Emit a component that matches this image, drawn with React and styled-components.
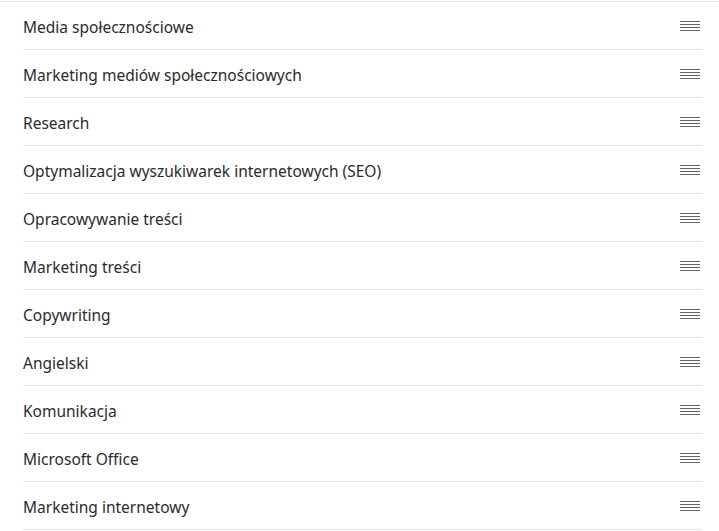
import React from 'react';
import styled, { createGlobalStyle } from 'styled-components';

const GlobalStyle = createGlobalStyle`
  body {
    margin: 0;
    background: #ffffff;
    font-family: "Noto Sans", "Open Sans", sans-serif;
  }
`

const Page = styled.div`
  padding-top: 1px;
`

const List = styled.ul`
  list-style: none;
  margin: 0;
  padding: 0 17px 0 23px;
  border-top: 1px solid #e6e6e6;
`

const Row = styled.li`
  display: flex;
  align-items: center;
  justify-content: space-between;
  height: 47px;
  border-bottom: 1px solid #e6e6e6;
`

const Label = styled.span`
  font-size: 15.5px;
  color: #2b2b2b;
  margin-top: 2px;
`

const Handle = styled.svg`
  width: 20px;
  height: 10px;
  margin-right: 2px;
  flex-shrink: 0;
`

const skills = [
  'Media społecznościowe',
  'Marketing mediów społecznościowych',
  'Research',
  'Optymalizacja wyszukiwarek internetowych (SEO)',
  'Opracowywanie treści',
  'Marketing treści',
  'Copywriting',
  'Angielski',
  'Komunikacja',
  'Microsoft Office',
  'Marketing internetowy',
]

function DragHandle() {
  return (
    <Handle viewBox="0 0 20 10">
      {[0.5, 3.5, 6.5, 9.5].map(y => (
        <line key={y} x1="0" x2="20" y1={y} y2={y} stroke="#666" strokeWidth="1" />
      ))}
    </Handle>
  )
}

export default function App() {
  return (
    <>
      <GlobalStyle />
      <Page>
        <List>
          {skills.map(s => (
            <Row key={s}>
              <Label>{s}</Label>
              <DragHandle />
            </Row>
          ))}
        </List>
      </Page>
    </>
  )
}
